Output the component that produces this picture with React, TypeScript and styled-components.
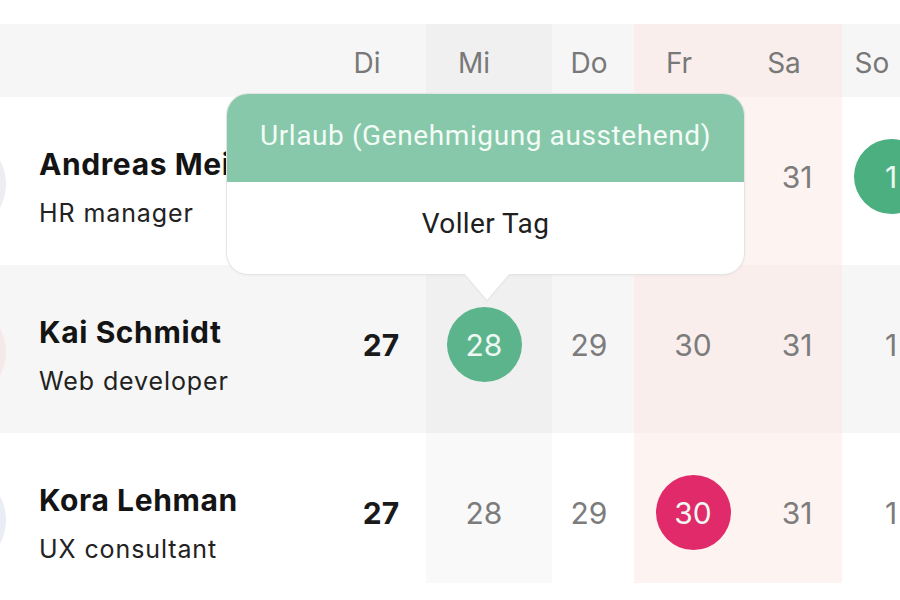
import React from "react";
import styled, { createGlobalStyle } from "styled-components";

const Global = createGlobalStyle`
  html, body { margin: 0; padding: 0; background: #ffffff; }
  body { width: 900px; height: 600px; overflow: hidden; font-family: Inter, "Noto Sans", sans-serif; }
`;

type Tint = "none" | "gray" | "pink" | "soft";

const COLS = "330px 96px 126px 82px 104px 104px 104px";

const shadeColor = (tint: Tint, shaded: boolean) => {
  if (shaded) {
    switch (tint) {
      case "gray": return "#f0f0f0";
      case "pink": return "#f9eeec";
      case "soft": return "#f6f6f6";
      default: return "#f6f6f6";
    }
  }
  switch (tint) {
    case "gray": return "#f9f9f9";
    case "pink": return "#fdf3f1";
    default: return "#ffffff";
  }
};

const Page = styled.div`
  width: 900px;
  height: 600px;
  padding-top: 24px;
  box-sizing: border-box;
  overflow: hidden;
`;

const Table = styled.div`
  position: relative;
  width: 900px;
  height: 559px;
  overflow: hidden;
`;

const Row = styled.div<{ $h: number }>`
  display: grid;
  grid-template-columns: ${COLS};
  height: ${(p) => p.$h}px;
`;

const HeadCell = styled.div<{ $tint: Tint }>`
  display: flex;
  align-items: center;
  justify-content: center;
  padding-top: 4px;
  background: ${(p) => shadeColor(p.$tint, true)};
  font-family: Inter, "Noto Sans", sans-serif;
  font-size: 28px;
  color: #787878;
`;

const Shift = styled.span<{ $dx: number }>`
  display: inline-block;
  transform: translateX(${(p) => p.$dx}px);
`;

const NameCell = styled.div<{ $shaded: boolean }>`
  display: flex;
  align-items: flex-start;
  gap: 33px;
  padding-top: 49px;
  background: ${(p) => (p.$shaded ? "#f6f6f6" : "#ffffff")};
  overflow: visible;
  white-space: nowrap;
`;

const Avatar = styled.div<{ $c: string }>`
  flex: none;
  width: 100px;
  height: 100px;
  margin-left: -94px;
  margin-top: -12px;
  border-radius: 50%;
  background: ${(p) => p.$c};
`;

const NameBlock = styled.div`
  display: flex;
  flex-direction: column;
  gap: 15px;
`;

const Name = styled.div`
  font-family: Inter, "Noto Sans", sans-serif;
  font-weight: 700;
  font-size: 30px;
  line-height: 36px;
  letter-spacing: 0.6px;
  color: #141414;
`;

const Role = styled.div`
  font-family: Inter, "Noto Sans", sans-serif;
  font-size: 25px;
  line-height: 32px;
  letter-spacing: 0.9px;
  color: #222222;
`;

const DayCell = styled.div<{ $tint: Tint; $shaded: boolean }>`
  display: flex;
  justify-content: center;
  align-items: flex-start;
  padding-top: 42px;
  background: ${(p) => shadeColor(p.$tint, p.$shaded)};
`;

const Day = styled.div<{ $bg?: string; $bold?: boolean; $dx: number }>`
  width: 75px;
  height: 75px;
  border-radius: 50%;
  display: flex;
  align-items: center;
  justify-content: center;
  transform: translateX(${(p) => p.$dx}px);
  background: ${(p) => p.$bg ?? "transparent"};
  font-family: Inter, "Noto Sans", sans-serif;
  font-size: 30px;
  font-weight: ${(p) => (p.$bold ? 700 : 400)};
  color: ${(p) => (p.$bg ? "#eef8f2" : p.$bold ? "#1a1a1a" : "#7c7c7c")};
`;

const Tooltip = styled.div`
  position: absolute;
  left: 226px;
  top: 69px;
  width: 519px;
  border: 1px solid #e4e4e4;
  border-radius: 22px;
  background: #ffffff;
  box-shadow: 0 1px 3px rgba(0, 0, 0, 0.04);
  box-sizing: border-box;

  &::before {
    content: "";
    position: absolute;
    left: 236px;
    bottom: -28px;
    border-left: 24px solid transparent;
    border-right: 24px solid transparent;
    border-top: 28px solid #e6e6e6;
  }
  &::after {
    content: "";
    position: absolute;
    left: 237px;
    bottom: -26px;
    border-left: 23px solid transparent;
    border-right: 23px solid transparent;
    border-top: 27px solid #ffffff;
  }
`;

const TipHead = styled.div`
  height: 88px;
  border-radius: 21px 21px 0 0;
  background: #86c8a9;
  display: flex;
  align-items: center;
  justify-content: center;
  padding-bottom: 6px;
  box-sizing: border-box;
  font-family: Roboto, "Noto Sans", sans-serif;
  font-size: 28px;
  letter-spacing: 0.6px;
  color: #f3fbf6;
`;

const TipBody = styled.div`
  height: 92px;
  display: flex;
  align-items: center;
  justify-content: center;
  padding-bottom: 10px;
  box-sizing: border-box;
  font-family: Roboto, "Noto Sans", sans-serif;
  font-size: 28px;
  letter-spacing: 0.4px;
  color: #202020;
`;

type Col = { label: string; tint: Tint; headDx: number; numDx: number };

const columns: Col[] = [
  { label: "Di", tint: "none", headDx: -11, numDx: 3 },
  { label: "Mi", tint: "gray", headDx: -15, numDx: -5 },
  { label: "Do", tint: "soft", headDx: -4, numDx: -4 },
  { label: "Fr", tint: "pink", headDx: -7, numDx: 7 },
  { label: "Sa", tint: "pink", headDx: -6, numDx: 7 },
  { label: "So", tint: "none", headDx: -22, numDx: -3 },
];

type Mark = { bg?: string; bold?: boolean };

type Person = {
  name: string;
  role: string;
  avatar: string;
  shaded: boolean;
  days: string[];
  marks: Record<number, Mark>;
};

const people: Person[] = [
  {
    name: "Andreas Meier",
    role: "HR manager",
    avatar: "#eceef2",
    shaded: false,
    days: ["27", "28", "29", "30", "31", "1"],
    marks: { 0: { bold: true }, 5: { bg: "#4caf80" } },
  },
  {
    name: "Kai Schmidt",
    role: "Web developer",
    avatar: "#f5eaea",
    shaded: true,
    days: ["27", "28", "29", "30", "31", "1"],
    marks: { 0: { bold: true }, 1: { bg: "#5cb48d" } },
  },
  {
    name: "Kora Lehman",
    role: "UX consultant",
    avatar: "#e9eef4",
    shaded: false,
    days: ["27", "28", "29", "30", "31", "1"],
    marks: { 0: { bold: true }, 3: { bg: "#e12a6a" } },
  },
];

export default function App() {
  return (
    <>
      <Global />
      <Page>
        <Table>
          <Row $h={73}>
            <HeadCell $tint="none" />
            {columns.map((c) => (
              <HeadCell key={c.label} $tint={c.tint}>
                <Shift $dx={c.headDx}>{c.label}</Shift>
              </HeadCell>
            ))}
          </Row>
          {people.map((p) => (
            <Row key={p.name} $h={168}>
              <NameCell $shaded={p.shaded}>
                <Avatar $c={p.avatar} />
                <NameBlock>
                  <Name>{p.name}</Name>
                  <Role>{p.role}</Role>
                </NameBlock>
              </NameCell>
              {columns.map((c, i) => {
                const m = p.marks[i] ?? {};
                return (
                  <DayCell key={c.label} $tint={c.tint} $shaded={p.shaded}>
                    <Day $dx={c.numDx} $bg={m.bg} $bold={m.bold}>
                      {p.days[i]}
                    </Day>
                  </DayCell>
                );
              })}
            </Row>
          ))}
          <Tooltip>
            <TipHead>Urlaub (Genehmigung ausstehend)</TipHead>
            <TipBody>Voller Tag</TipBody>
          </Tooltip>
        </Table>
      </Page>
    </>
  );
}
